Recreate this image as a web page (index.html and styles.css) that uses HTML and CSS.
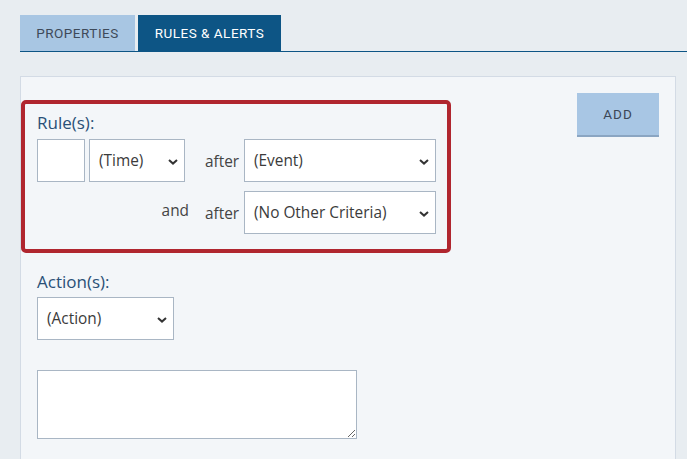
FILE: index.html
```html
<!DOCTYPE html>
<html>
<head>
<meta charset="utf-8">
<link rel="stylesheet" href="styles.css">
</head>
<body>
<div class="tabs">
  <div class="tab tab-light">PROPERTIES</div>
  <div class="tab tab-active">RULES &amp; ALERTS</div>
</div>
<div class="panel">
  <div class="top">
    <div class="rules">
      <div class="label">Rule(s):</div>
      <div class="row">
        <input class="num" type="text">
        <div class="sel sel-time"><span>(Time)</span><svg class="chev" viewBox="0 0 10 6"><path d="M1 1 L5 4.6 L9 1" fill="none" stroke="#333" stroke-width="2"/></svg></div>
        <span class="word after">after</span>
        <div class="sel sel-wide"><span>(Event)</span><svg class="chev" viewBox="0 0 10 6"><path d="M1 1 L5 4.6 L9 1" fill="none" stroke="#333" stroke-width="2"/></svg></div>
      </div>
      <div class="row row2">
        <span class="word and">and</span>
        <span class="word after after2">after</span>
        <div class="sel sel-wide"><span>(No Other Criteria)</span><svg class="chev" viewBox="0 0 10 6"><path d="M1 1 L5 4.6 L9 1" fill="none" stroke="#333" stroke-width="2"/></svg></div>
      </div>
    </div>
    <div class="add">ADD</div>
  </div>
  <div class="actions">
    <div class="label">Action(s):</div>
    <div class="sel sel-action"><span>(Action)</span><svg class="chev" viewBox="0 0 10 6"><path d="M1 1 L5 4.6 L9 1" fill="none" stroke="#333" stroke-width="2"/></svg></div>
    <textarea class="note"></textarea>
  </div>
</div>
</body>
</html>
```

FILE: styles.css
```css
html, body {
  margin: 0;
  padding: 0;
}
body {
  background: #e8edf1;
  font-family: "Open Sans", Lato, sans-serif;
  width: 687px;
  height: 459px;
  overflow: hidden;
}
.tabs {
  display: flex;
  gap: 3px;
  margin-left: 20px;
  padding-top: 15px;
  border-bottom: 1px solid #0d5585;
}
.tab {
  height: 36px;
  display: flex;
  align-items: center;
  justify-content: center;
  font-family: Roboto, "Liberation Sans", sans-serif;
  font-size: 13.5px;
  letter-spacing: 0.5px;
}
.tab-light {
  width: 115px;
  background: #a8c6e3;
  color: #3e4a5a;
}
.tab-active {
  width: 143px;
  background: #0d5585;
  color: #ffffff;
}
.panel {
  margin: 24px 0 0 20px;
  width: 654px;
  height: 400px;
  background: #f3f6f9;
  border: 1px solid #d3dbe5;
  border-bottom: none;
}
.top {
  display: flex;
  align-items: flex-start;
}
.rules {
  margin-top: 23px;
  border: 4px solid #b0262f;
  border-radius: 5px;
  padding: 8px 11px 0 12px;
  box-sizing: border-box;
  width: 430px;
  height: 153px;
}
.label {
  font-size: 17px;
  line-height: 22px;
  color: #2a5077;
  margin-bottom: 5px;
}
.row {
  display: flex;
  align-items: center;
  height: 43px;
}
.row2 {
  margin-top: 9px;
  justify-content: flex-end;
}
.num {
  width: 48px;
  height: 43px;
  box-sizing: border-box;
  border: 1px solid #a9b6c4;
  background: #fff;
  margin: 0 4px 0 0;
  padding: 0;
}
.sel {
  position: relative;
  height: 43px;
  box-sizing: border-box;
  border: 1px solid #a9b6c4;
  background: #fff;
  display: flex;
  align-items: center;
  padding-left: 9px;
  font-size: 15.4px;
  color: #3b3b3b;
}
.chev {
  position: absolute;
  right: 6px;
  top: 50%;
  width: 10px;
  height: 6px;
  margin-top: -2px;
}
.sel-time {
  width: 96px;
}
.sel-wide {
  width: 192px;
}
.sel-action {
  width: 137px;
}
.word {
  font-size: 15.4px;
  color: #444;
}
.after {
  width: 39px;
  margin: 2px 0 0 20px;
}
.after2 {
  margin-left: 16px;
}
.and {
  margin-top: -4px;
}
.add {
  margin: 16px 16px 0 auto;
  width: 82px;
  height: 44px;
  box-sizing: border-box;
  background: #a8c6e4;
  border-bottom: 2px solid #8aa5c2;
  display: flex;
  align-items: center;
  justify-content: center;
  font-family: Roboto, "Liberation Sans", sans-serif;
  font-size: 13.5px;
  letter-spacing: 1px;
  color: #3b4657;
}
.actions {
  padding-left: 16px;
  margin-top: 18px;
  display: flex;
  flex-direction: column;
  align-items: flex-start;
}
.actions .label {
  margin-bottom: 4px;
}
.note {
  margin: 30px 0 0 0;
  width: 320px;
  height: 69px;
  box-sizing: border-box;
  border: 1px solid #a9b6c4;
  background: #fff;
  padding: 0;
}
```
